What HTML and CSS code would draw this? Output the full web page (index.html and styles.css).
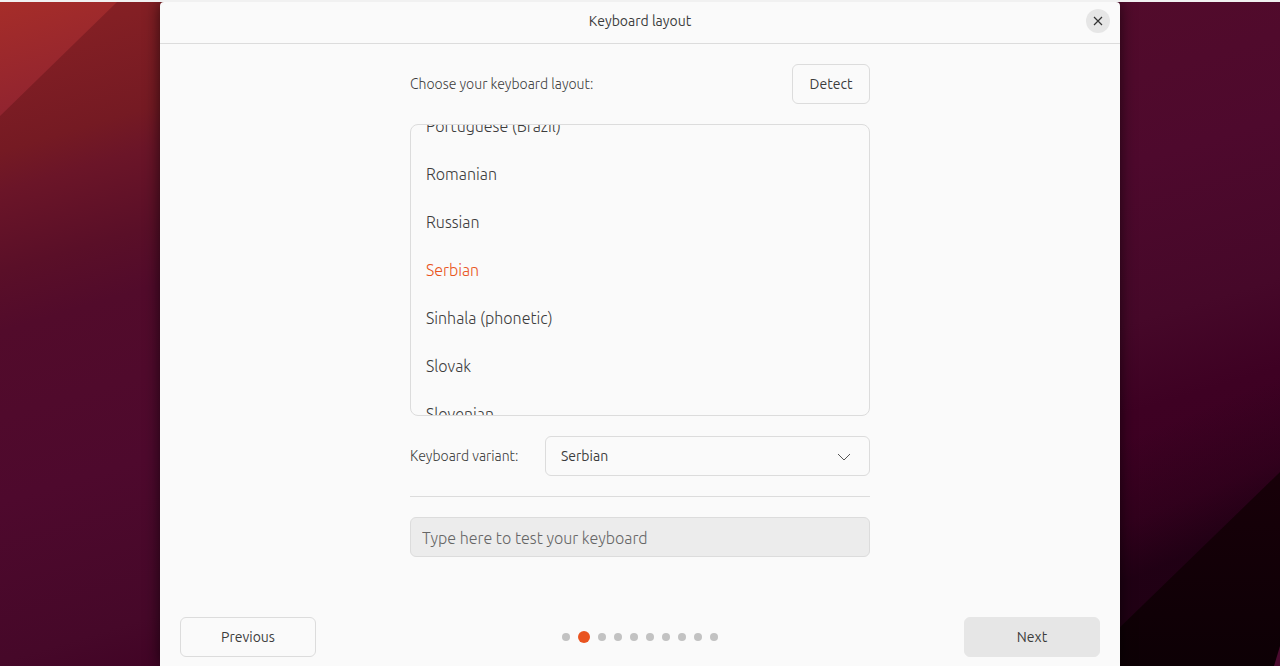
FILE: index.html
```html
<!DOCTYPE html>
<html lang="en">
<head>
<meta charset="utf-8">
<meta name="viewport" content="width=device-width, initial-scale=1">
<title>Keyboard layout</title>
<link rel="stylesheet" href="styles.css">
</head>
<body>
<div class="desktop">
  <svg class="wallpaper" viewBox="0 0 1280 664" preserveAspectRatio="none" aria-hidden="true">
    <defs>
      <linearGradient id="base" gradientUnits="userSpaceOnUse" x1="0" y1="0" x2="275" y2="917">
        <stop offset="0" stop-color="#8a2124"/>
        <stop offset="0.05" stop-color="#831f24"/>
        <stop offset="0.15" stop-color="#751a23"/>
        <stop offset="0.19" stop-color="#6b1528"/>
        <stop offset="0.27" stop-color="#5a0f28"/>
        <stop offset="0.33" stop-color="#520b2b"/>
        <stop offset="0.5" stop-color="#4e092d"/>
        <stop offset="0.66" stop-color="#460829"/>
        <stop offset="0.75" stop-color="#3e0123"/>
        <stop offset="1" stop-color="#390020"/>
      </linearGradient>
      <linearGradient id="ray" gradientUnits="userSpaceOnUse" x1="0" y1="0" x2="35" y2="114">
        <stop offset="0" stop-color="#a62d29"/>
        <stop offset="1" stop-color="#8f2330"/>
      </linearGradient>
      <linearGradient id="fold" gradientUnits="userSpaceOnUse" x1="1200" y1="548" x2="1150" y2="428">
        <stop offset="0" stop-color="#180010" stop-opacity="0.75"/>
        <stop offset="0.4" stop-color="#180010" stop-opacity="0.3"/>
        <stop offset="1" stop-color="#180010" stop-opacity="0"/>
      </linearGradient>
      <linearGradient id="corner" x1="0" y1="0" x2="0" y2="1">
        <stop offset="0" stop-color="#180009"/>
        <stop offset="1" stop-color="#0d0005"/>
      </linearGradient>
    </defs>
    <rect width="1280" height="664" fill="url(#base)"/>
    <path d="M0 0H117L0 114Z" fill="url(#ray)"/>
    <path d="M1100 300H1280V664H1080Z" fill="url(#fold)"/>
    <path d="M1080 664L1280 470V664Z" fill="url(#corner)"/>
    <path d="M1274 664L1280 644V664Z" fill="#4a0a2e"/>
  </svg>

  <main class="window">
    <header class="titlebar">
      <h1 class="title">Keyboard layout</h1>
      <button class="close" type="button" aria-label="Close">
        <svg width="10" height="10" viewBox="0 0 10 10" aria-hidden="true"><path d="M1 1L9 9M9 1L1 9"/></svg>
      </button>
    </header>

    <form class="content">
      <div class="row">
        <span class="label" id="layout-label">Choose your keyboard layout:</span>
        <button class="button detect" type="button">Detect</button>
      </div>

      <div class="list" role="listbox" aria-labelledby="layout-label">
        <button class="item" type="button" role="option">Portuguese (Brazil)</button>
        <button class="item" type="button" role="option">Romanian</button>
        <button class="item" type="button" role="option">Russian</button>
        <button class="item selected" type="button" role="option" aria-selected="true">Serbian</button>
        <button class="item" type="button" role="option">Sinhala (phonetic)</button>
        <button class="item" type="button" role="option">Slovak</button>
        <button class="item" type="button" role="option">Slovenian</button>
      </div>

      <div class="row">
        <label class="label" for="variant">Keyboard variant:</label>
        <div class="picker">
          <select class="select" id="variant"><option>Serbian</option></select>
          <svg class="chevron" width="14" height="8" viewBox="0 0 14 8" aria-hidden="true"><path d="M1 1L7 7L13 1"/></svg>
        </div>
      </div>

      <hr class="rule">
      <input class="test" type="text" placeholder="Type here to test your keyboard" aria-label="Type here to test your keyboard">
    </form>

    <footer class="footer">
      <button class="button wide" type="button">Previous</button>
      <div class="dots" role="img" aria-label="Step 2 of 10">
        <span class="dot"></span><span class="dot current"></span><span class="dot"></span><span class="dot"></span><span class="dot"></span><span class="dot"></span><span class="dot"></span><span class="dot"></span><span class="dot"></span><span class="dot"></span>
      </div>
      <button class="button wide filled" type="button">Next</button>
    </footer>
  </main>
</div>
</body>
</html>
```
FILE: styles.css
```css
* { box-sizing: border-box; }

body {
  margin: 0;
  color: #3c3c3c;
  background: #f1f1f1;
  font-family: Ubuntu, "Open Sans", "Noto Sans", sans-serif;
  font-size: 14px;
}

button, input, select { font: inherit; color: inherit; }

.desktop {
  position: relative;
  display: flex;
  justify-content: center;
  min-height: 100vh;
  border-top: 2px solid #f1f1f1;
  overflow: hidden;
}

.wallpaper {
  position: absolute;
  inset: 0;
  width: 100%;
  height: 100%;
}

.window {
  position: relative;
  display: flex;
  flex-direction: column;
  width: 75%;
  min-width: 520px;
  background: #fafafa;
  border-radius: 4px 4px 0 0;
  box-shadow: 0 0 16px rgba(0, 0, 0, 0.65);
}

.titlebar {
  display: grid;
  grid-template-columns: 1fr auto 1fr;
  align-items: center;
  padding: 7px 10px 10px;
  border-bottom: 1px solid #dcdcdc;
}

.title {
  grid-column: 2;
  margin: 0;
  font-size: 14px;
  line-height: 24px;
  font-weight: 400;
}

.close {
  display: grid;
  place-items: center;
  justify-self: end;
  width: 24px;
  height: 24px;
  padding: 0;
  border: 0;
  border-radius: 50%;
  background: #e6e6e6;
}

.close path { fill: none; stroke: #333; stroke-width: 1.2; }

.content {
  display: flex;
  flex-direction: column;
  gap: 20px;
  width: 460px;
  margin: 20px auto 0;
}

.row {
  display: flex;
  align-items: center;
  justify-content: space-between;
  gap: 20px;
}

.label { font-weight: 300; white-space: nowrap; }

.button {
  height: 40px;
  padding: 0 15px;
  border: 1px solid #dcdcdc;
  border-radius: 6px;
  background: transparent;
  font-weight: 400;
}

.detect { min-width: 78px; }
.wide { width: 136px; }
.filled { border-color: #e6e6e6; background: #e6e6e6; }

.list {
  display: flex;
  flex-direction: column;
  justify-content: center;
  height: 292px;
  border: 1px solid #dcdcdc;
  border-radius: 8px;
  overflow: hidden;
}

.item {
  flex: none;
  height: 48px;
  padding: 0 15px;
  border: 0;
  background: transparent;
  font-size: 16px;
  font-weight: 300;
  text-align: left;
}

.selected { color: #e95420; }

.picker { position: relative; flex: 0 0 325px; }

.select {
  appearance: none;
  width: 100%;
  height: 40px;
  padding: 0 40px 0 15px;
  border: 1px solid #dcdcdc;
  border-radius: 6px;
  background: transparent;
  font-weight: 400;
}

.chevron {
  position: absolute;
  top: 17px;
  right: 19px;
  fill: none;
  stroke: #555;
  pointer-events: none;
}

.rule {
  width: 100%;
  margin: 0;
  border: 0;
  border-top: 1px solid #dcdcdc;
}

.test {
  height: 40px;
  padding: 2px 11px 0;
  border: 1px solid #dcdcdc;
  border-radius: 6px;
  background: #ececec;
  font-size: 16px;
  font-weight: 300;
}

.test::placeholder { color: #666; opacity: 1; }

.footer {
  display: flex;
  align-items: center;
  justify-content: space-between;
  margin-top: auto;
  padding: 20px 20px 9px;
}

.dots { display: flex; align-items: center; gap: 8px; }
.dot { width: 8px; height: 8px; border-radius: 50%; background: #c2c2c2; }
.current { width: 12px; height: 12px; background: #e95420; }
```
